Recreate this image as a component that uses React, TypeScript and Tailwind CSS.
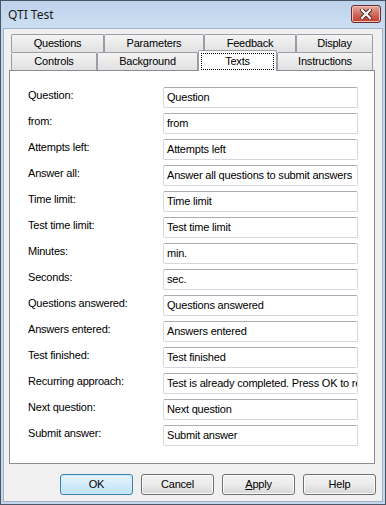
import React from 'react';

const rows: [string, string][] = [
  ['Question:', 'Question'],
  ['from:', 'from'],
  ['Attempts left:', 'Attempts left'],
  ['Answer all:', 'Answer all questions to submit answers'],
  ['Time limit:', 'Time limit'],
  ['Test time limit:', 'Test time limit'],
  ['Minutes:', 'min.'],
  ['Seconds:', 'sec.'],
  ['Questions answered:', 'Questions answered'],
  ['Answers entered:', 'Answers entered'],
  ['Test finished:', 'Test finished'],
  ['Recurring approach:', 'Test is already completed. Press OK to reset the test'],
  ['Next question:', 'Next question'],
  ['Submit answer:', 'Submit answer'],
];

const topTabs = [
  { label: 'Questions', w: 'w-[93px]' },
  { label: 'Parameters', w: 'w-[100px]' },
  { label: 'Feedback', w: 'w-[92px]' },
  { label: 'Display', w: 'w-[77px]' },
];

const Tab = ({ label, w }: { label: string; w: string }) => (
  <div
    className={`${w} h-[18px] flex items-center justify-center border border-b-0 border-[#9a9da5] bg-gradient-to-b from-[#f4f4f4] to-[#e1e1e1] rounded-t-[2px]`}
  >
    {label}
  </div>
);

const Button = ({ children, primary }: { children: React.ReactNode; primary?: boolean }) => (
  <div
    className={
      primary
        ? 'w-[73px] h-[21px] flex items-center justify-center rounded-[3px] border border-[#3c7fb1] bg-gradient-to-b from-[#e8f4fc] to-[#bfe2f8] shadow-[inset_0_0_0_1px_#cfeafc]'
        : 'w-[73px] h-[21px] flex items-center justify-center rounded-[3px] border border-[#707070] bg-gradient-to-b from-[#f3f3f3] via-[#ebebeb] to-[#d6d6d6] shadow-[inset_0_0_0_1px_#fbfbfb]'
    }
  >
    {children}
  </div>
);

export default function App() {
  return (
    <div
      className="w-[386px] h-[505px] flex flex-col border border-[#4a5565] bg-[#c4d7ee] px-[2px] pb-[2px] text-[11px] tracking-[-0.2px] text-black"
      style={{ fontFamily: '"Liberation Sans", Arial, sans-serif' }}
    >
      {/* title bar */}
      <div className="h-[27px] flex items-start justify-between pl-[5px] pr-[2px] bg-gradient-to-b from-[#bcd2eb] to-[#cddff2]">
        <span
          className="mt-[5px] text-[12px] tracking-normal text-[#1a1a1a]"
          style={{ fontFamily: '"Noto Sans", "Open Sans", sans-serif' }}
        >
          QTI Test
        </span>
        <div className="mt-[4px] w-[30px] h-[18px] flex items-center justify-center rounded-[3px] border border-[#6b2a2a] bg-gradient-to-b from-[#e5a89f] via-[#cf6b5f] to-[#c0392b] shadow-[inset_0_0_0_1px_#f0c2bb]">
          <svg width="12" height="10" viewBox="0 0 12 10">
            <path d="M2 1 L10 9 M10 1 L2 9" stroke="#4a2020" strokeWidth="4" strokeLinecap="square" />
            <path d="M2 1 L10 9 M10 1 L2 9" stroke="#ffffff" strokeWidth="2.2" strokeLinecap="square" />
          </svg>
        </div>
      </div>

      {/* body */}
      <div className="flex-1 flex flex-col border border-[#a3b3c6] bg-[#f0f0f0] pt-[5px] pl-[5px] pr-[6px]">
        {/* tabs */}
        <div className="flex flex-col pl-[2px]">
          <div className="flex">
            {topTabs.map((t) => (
              <Tab key={t.label} label={t.label} w={t.w} />
            ))}
          </div>
          <div className="flex items-end h-[18px]">
            <Tab label="Controls" w="w-[86px]" />
            <Tab label="Background" w="w-[101px]" />
            <div className="relative top-[1px] z-10 w-[79px] h-[21px] border border-b-0 border-[#9a9da5] bg-white rounded-t-[2px] p-[2px] pb-[1px]">
              <div className="w-full h-full flex items-center justify-center border border-dotted border-black leading-none">
                Texts
              </div>
            </div>
            <Tab label="Instructions" w="w-[96px]" />
          </div>
        </div>

        {/* panel */}
        <div className="w-[366px] h-[394px] border border-[#898c95] bg-white pt-[16px] pl-[18px] pr-[15px] flex flex-col gap-[5px]">
          {rows.map(([label, value]) => (
            <div key={label} className="flex items-center h-[21px]">
              <span className="w-[135px] pb-[4px] shrink-0">{label}</span>
              <div className="w-[195px] h-[21px] flex items-center overflow-hidden whitespace-nowrap rounded-[2px] border border-[#d5d8de] border-t-[#abadb3] pl-[3px] bg-white">
                {value}
              </div>
            </div>
          ))}
        </div>

        {/* buttons */}
        <div className="flex justify-end gap-[8px] mt-[10px] pr-[0px]">
          <Button primary>OK</Button>
          <Button>Cancel</Button>
          <Button>
            <span>
              <span className="underline">A</span>pply
            </span>
          </Button>
          <Button>Help</Button>
        </div>
      </div>
    </div>
  );
}
